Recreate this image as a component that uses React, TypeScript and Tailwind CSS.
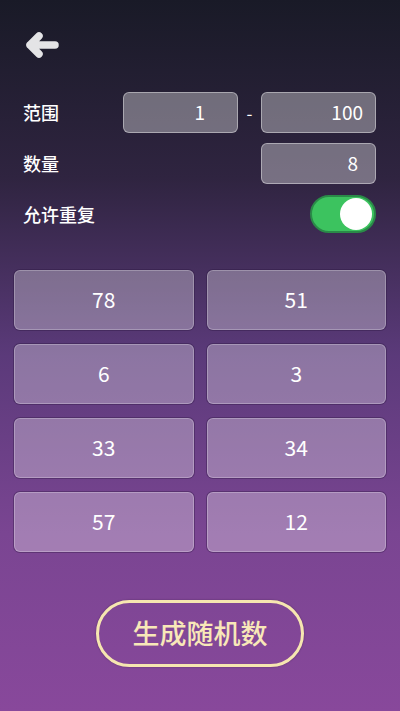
const numbers = [78, 51, 6, 3, 33, 34, 57, 12];

function BackArrow() {
  return (
    <svg width="40" height="30" viewBox="0 0 40 30" fill="none">
      <path
        d="M33 15H8M17 6L8 15L17 24"
        stroke="#e4e4e6"
        strokeWidth="7.5"
        strokeLinecap="round"
        strokeLinejoin="round"
      />
    </svg>
  );
}

function Field({ value, pad }: { value: string; pad: string }) {
  return (
    <div className={`w-[115px] h-[41px] rounded-md bg-white/35 border border-white/40 flex items-center justify-end text-[19px] text-white ${pad}`}>
      {value}
    </div>
  );
}

export default function App() {
  return (
    <div
      className="w-[400px] h-[711px] overflow-hidden flex flex-col bg-[linear-gradient(180deg,#191a27_0%,#2f2440_25%,#5b3a7a_50%,#7a4592_75%,#88489b_100%)] text-white"
      style={{ fontFamily: '"Noto Sans CJK SC", "Noto Sans", sans-serif' }}
    >
      <div className="pl-[22px] pt-[30px] h-[92px]">
        <BackArrow />
      </div>

      <div className="flex items-center h-[41px] pl-[23px] pr-[24px]">
        <span className="text-[18px] font-medium flex-1">范围</span>
        <Field value="1" pad="pr-[32px]" />
        <span className="w-[23px] text-center text-[17px]">-</span>
        <Field value="100" pad="pr-[12px]" />
      </div>

      <div className="flex items-center h-[42px] mt-[9px] pl-[23px] pr-[24px]">
        <span className="text-[18px] font-medium flex-1">数量</span>
        <Field value="8" pad="pr-[17px]" />
      </div>

      <div className="flex items-center h-[38px] mt-[11px] pl-[23px] pr-[24px]">
        <span className="text-[18px] font-medium flex-1">允许重复</span>
        <div className="w-[66px] h-[38px] rounded-full bg-[#3cc35f] border-2 border-[#2a8a48] flex items-center justify-end pr-[2px]">
          <div className="w-[32px] h-[32px] rounded-full bg-white" />
        </div>
      </div>

      <div className="grid grid-cols-2 gap-x-[13px] gap-y-[14px] px-[14px] mt-[37px]">
        {numbers.map((n, i) => (
          <div
            key={i}
            className="h-[60px] rounded-md bg-white/30 border border-white/25 shadow-[0_0_0_1px_rgba(40,20,60,0.35)] flex items-center justify-center text-[21px]"
          >
            {n}
          </div>
        ))}
      </div>

      <div className="flex justify-center mt-[48px]">
        <button className="w-[208px] h-[67px] rounded-full border-[3px] border-[#f6e6b0] text-[#f8e8b8] text-[27px] font-medium shadow-[0_0_2px_rgba(0,0,0,0.35)]">
          生成随机数
        </button>
      </div>
    </div>
  );
}
